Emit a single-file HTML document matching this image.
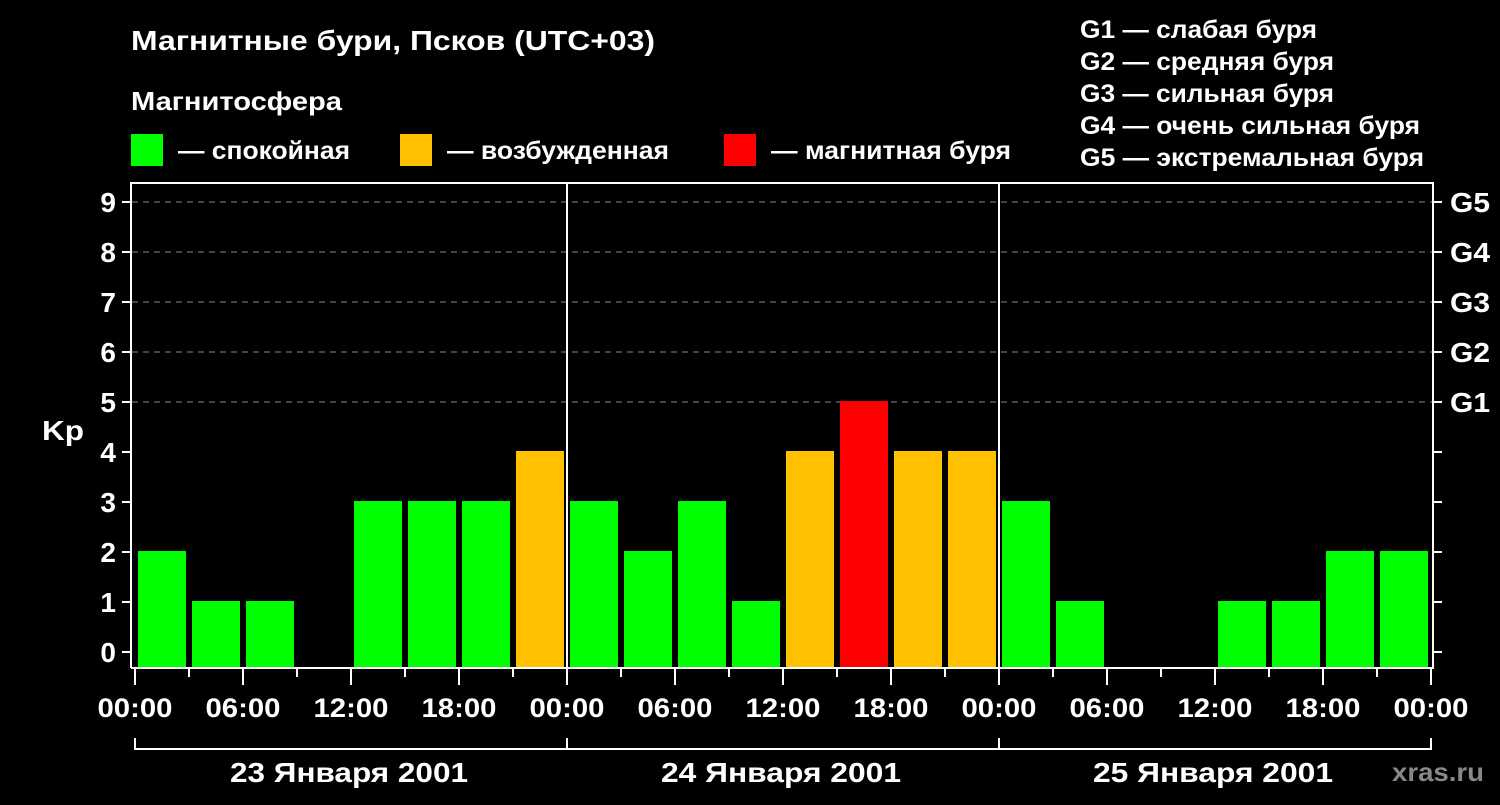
<!DOCTYPE html><html><head><meta charset="utf-8"><style>
body{margin:0;background:#000;width:1500px;height:800px;overflow:hidden}
svg text{font-family:"Liberation Sans",sans-serif;font-weight:bold;fill:#fff}
</style></head><body>
<svg width="1500" height="800" xmlns="http://www.w3.org/2000/svg">
<text x="131" y="50" font-size="28" textLength="524" lengthAdjust="spacingAndGlyphs">Магнитные бури, Псков (UTC+03)</text>
<text x="131" y="110" font-size="26" textLength="211" lengthAdjust="spacingAndGlyphs">Магнитосфера</text>
<rect x="131" y="134" width="32" height="32" fill="#00ff00"/>
<text x="178" y="159" font-size="25" textLength="172" lengthAdjust="spacingAndGlyphs">— спокойная</text>
<rect x="400" y="134" width="32" height="32" fill="#ffc000"/>
<text x="447" y="159" font-size="25" textLength="222" lengthAdjust="spacingAndGlyphs">— возбужденная</text>
<rect x="724" y="134" width="32" height="32" fill="#ff0000"/>
<text x="771" y="159" font-size="25" textLength="240" lengthAdjust="spacingAndGlyphs">— магнитная буря</text>
<g font-size="25" lengthAdjust="spacingAndGlyphs">
<text x="1080" y="38" textLength="237" lengthAdjust="spacingAndGlyphs">G1 — слабая буря</text>
<text x="1080" y="70" textLength="254" lengthAdjust="spacingAndGlyphs">G2 — средняя буря</text>
<text x="1080" y="102" textLength="254" lengthAdjust="spacingAndGlyphs">G3 — сильная буря</text>
<text x="1080" y="134" textLength="340" lengthAdjust="spacingAndGlyphs">G4 — очень сильная буря</text>
<text x="1080" y="166" textLength="344" lengthAdjust="spacingAndGlyphs">G5 — экстремальная буря</text>
</g>
<g stroke="#888" stroke-width="1" stroke-dasharray="6,5">
<line x1="132" y1="202" x2="1432" y2="202"/><line x1="132" y1="252" x2="1432" y2="252"/>
<line x1="132" y1="302" x2="1432" y2="302"/><line x1="132" y1="352" x2="1432" y2="352"/>
<line x1="132" y1="402" x2="1432" y2="402"/>
</g>
<g id="bars"></g>
<g stroke="#fff" stroke-width="2" fill="none">
<path d="M131 668V183H1433V668H131"/>
<line x1="567" y1="183" x2="567" y2="668"/><line x1="999" y1="183" x2="999" y2="668"/>
<path d="M135 738V749H1431V738M567 738V749M999 738V749"/>
</g>
<g id="ticks" stroke="#fff" stroke-width="2"></g>
<g font-size="28" text-anchor="end" id="yl"></g>
<text x="42" y="440" font-size="28" textLength="42" lengthAdjust="spacingAndGlyphs">Kp</text>
<g font-size="28" id="gl"></g>
<g font-size="27" text-anchor="middle" id="xl"></g>
<g font-size="28" text-anchor="middle">
<text x="349" y="782" textLength="238" lengthAdjust="spacingAndGlyphs">23 Января 2001</text>
<text x="781" y="782" textLength="240" lengthAdjust="spacingAndGlyphs">24 Января 2001</text>
<text x="1213" y="782" textLength="240" lengthAdjust="spacingAndGlyphs">25 Января 2001</text>
</g>
<text x="1392" y="781" font-size="26" textLength="92" lengthAdjust="spacingAndGlyphs" style="fill:#888">xras.ru</text>
</svg>
<script>
var v=[2,1,1,0,3,3,3,4,3,2,3,1,4,5,4,4,3,1,0,0,1,1,2,2],ns="http://www.w3.org/2000/svg";
function el(p,t,a,txt){var e=document.createElementNS(ns,t);for(var k in a)e.setAttribute(k,a[k]);if(txt)e.textContent=txt;document.getElementById(p).appendChild(e);}
v.forEach(function(k,i){if(!k)return;var c=k>=5?"#ff0000":k==4?"#ffc000":"#00ff00";var top=652-50*k-1;el("bars","rect",{x:138+54*i,y:top,width:48,height:668-top,fill:c});});
for(var i=0;i<=24;i++){var x=135+54*i;el("ticks","line",{x1:x,y1:668,x2:x,y2:i%2?677:685});if(i%2==0)el("xl","text",{x:x,y:717,textLength:75,lengthAdjust:"spacingAndGlyphs"},["00:00","06:00","12:00","18:00"][(i/2)%4]);}
for(var k=0;k<=9;k++){var y=652-50*k;el("ticks","line",{x1:122,y1:y,x2:131,y2:y});el("ticks","line",{x1:1433,y1:y,x2:1442,y2:y});el("yl","text",{x:116,y:y+10},""+k);if(k>=5)el("gl","text",{x:1450,y:y+10,textLength:40,lengthAdjust:"spacingAndGlyphs"},"G"+(k-4));}
</script>
</body></html>
